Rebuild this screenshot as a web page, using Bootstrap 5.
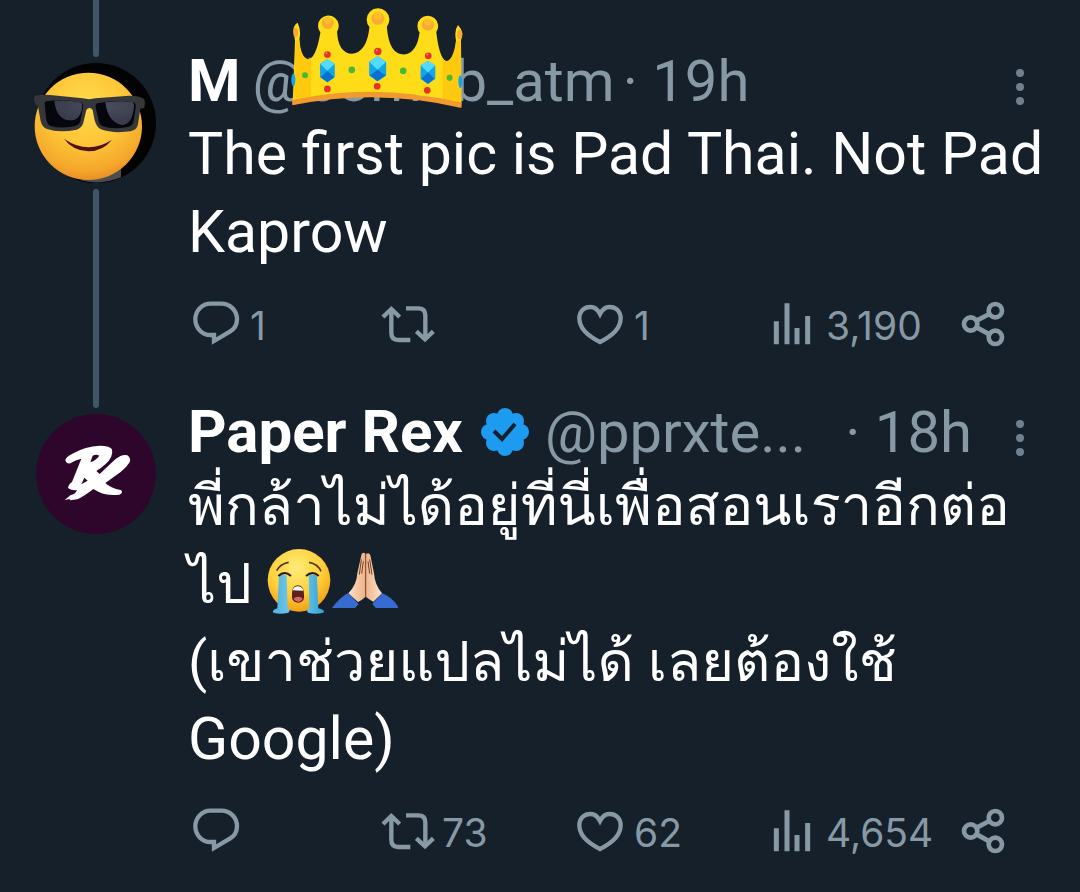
<!DOCTYPE html>
<html lang="en">
<head>
<meta charset="utf-8">
<meta name="viewport" content="width=device-width, initial-scale=1">
<title>Thread</title>
<link href="https://cdn.jsdelivr.net/npm/bootstrap@5.3.0/dist/css/bootstrap.min.css" rel="stylesheet">
<style>
:root { --page: #16202a; --muted: #8899a6; --thread: #3f5568; }
body { background: var(--page); color: #fff; font-family: Roboto, Loma, "Liberation Sans", sans-serif; font-size: 59px; overflow-x: hidden; }
.post { gap: 32px; padding: 0 36px; }
.rail { width: 120px; }
.thread-top, .thread-rest { width: 6px; background: var(--thread); }
.thread-top { height: 57px; border-radius: 0 0 3px 3px; margin-bottom: 6px; }
.thread-rest { border-radius: 3px 3px 0 0; margin-top: 6px; }
.avatar { width: 120px; height: 120px; overflow: visible; display: block; }
.post-main { padding-top: 47px; min-width: 0; }
.post-head { height: 68px; line-height: 68px; white-space: nowrap; }
.post-head a { text-decoration: none; }
.who { color: #fff; font-weight: 700; font-size: 60px; }
.handle, .when { color: var(--muted); font-size: 58px; }
.handle-box { margin-left: 12px; }
.when { margin-left: 8px; }
.more { width: 48px; height: 68px; }
.more svg { width: 48px; height: 48px; }
.post-text { line-height: 78px; margin: 0 0 30px; white-space: nowrap; }
.thai { font-size: 56px; line-height: 70px; }
.emoji { width: 66px; height: 66px; vertical-align: -12px; }
.crown { left: 38px; top: -40px; width: 172px; height: 102px; }
.tick { width: 48px; height: 48px; margin-left: 18px; }
.actions { display: grid; grid-template-columns: repeat(4, 1fr) 88px; }
.act { color: var(--muted); font: 39px/50px Inter, sans-serif; gap: 6px; }
.act svg { width: 56px; height: 48px; flex: none; }
</style>
</head>
<body>
<svg class="d-none" xmlns="http://www.w3.org/2000/svg">
  <symbol id="reply" viewBox="24 36 168 144"><path d="M92 44H124C150 44 171 64 171 91C171 108 163 121 148 129L102 156V138H92C66 138 46 117 46 91C46 65 66 44 92 44Z" fill="none" stroke="currentColor" stroke-width="13"/></symbol>
  <symbol id="repost" viewBox="600 36 168 144"><path d="M634 59V132Q634 153 655 153H691M609 84L634 60L659 84M678 58H715Q736 58 736 79V151M709 127L735 151L760 127" fill="none" stroke="currentColor" stroke-width="13"/></symbol>
  <symbol id="like" viewBox="36 36 168 144"><path d="M120 75C112 59 101 53 89 54C70 55 58 69 58 88C58 116 81 140 120 159C159 140 182 116 182 88C182 69 170 55 151 54C139 53 128 59 120 75Z" fill="none" stroke="currentColor" stroke-width="13"/></symbol>
  <symbol id="views" viewBox="612 36 168 144"><path d="M649 97V166M681 43V166M711 117V166M743 81V166" fill="none" stroke="currentColor" stroke-width="15"/></symbol>
  <symbol id="share" viewBox="408 36 168 144"><g fill="none" stroke="currentColor" stroke-width="14"><circle cx="452" cy="105" r="20"/><circle cx="526" cy="65" r="20"/><circle cx="526" cy="145" r="20"/><path d="M470 95L508 75M470 115L508 136"/></g></symbol>
  <symbol id="dots" viewBox="0 0 48 48"><g fill="#71808f"><circle cx="24" cy="16" r="4"/><circle cx="24" cy="30" r="4"/><circle cx="24" cy="44" r="4"/></g></symbol>
</svg>

<main>
<article class="post d-flex">
  <div class="rail d-flex flex-column align-items-center flex-shrink-0">
    <div class="thread-top"></div>
    <svg class="avatar" viewBox="48 69 360 360" role="img" aria-label="M">
      <defs>
        <radialGradient id="skin" cx=".48" cy=".3" r=".72"><stop offset="0" stop-color="#ffdb4d"/><stop offset=".5" stop-color="#fdc637"/><stop offset=".85" stop-color="#f5a72c"/><stop offset="1" stop-color="#e58a25"/></radialGradient>
        <radialGradient id="lens" cx=".6" cy=".25" r=".6"><stop offset="0" stop-color="#4b4e60"/><stop offset="1" stop-color="#3a3d4d"/></radialGradient>
      </defs>
      <circle cx="228" cy="249" r="180" fill="#030304"/>
      <path d="M180 420L303 382V412Q240 438 180 420Z" fill="#4d4d4d"/>
      <circle cx="205" cy="259" r="161" fill="url(#skin)"/>
      <path d="M132 296Q204 346 276 299Q250 333 205 334Q158 332 132 296Z" fill="#50120c"/>
      <path d="M42 170Q48 162 90 165L188 175Q207 180 226 175L328 167Q365 168 373 178Q377 190 373 203L361 207L354 252Q351 270 332 274Q277 281 243 268Q229 262 223 237L218 210Q208 198 199 210L190 248Q186 263 170 269Q118 280 81 267Q67 263 62 244L54 199Q41 194 42 170Z" fill="#36373a"/>
      <path d="M78 184Q130 176 181 187Q192 190 189 205L181 243Q178 256 162 259Q120 267 92 258Q82 254 79 239L74 194Q73 187 78 184ZM232 190Q285 180 335 185Q349 186 347 202L341 243Q338 258 324 261Q279 269 248 259Q237 255 235 238L227 202Q226 192 232 190Z" fill="#05070d"/>
      <path d="M103 182Q145 179 181 187Q188 190 186 203Q181 241 150 241Q109 239 103 182ZM256 187Q295 181 335 185Q343 187 342 199Q338 253 306 255Q263 247 256 187Z" fill="url(#lens)"/>
    </svg>
    <div class="thread-rest flex-grow-1"></div>
  </div>
  <div class="post-main flex-grow-1">
    <header class="post-head d-flex align-items-center">
      <a class="who" href="#">M</a>
      <span class="handle-box position-relative"><a class="handle" href="#">@born2b_atm</a>
        <svg class="crown position-absolute" viewBox="150 15 515 305" aria-hidden="true">
          <path d="M157 85Q158 68 170 62Q181 85 175 112Q178 175 199 173Q225 170 238 91A31 31 0 1 1 288 88Q291 153 333 155Q377 151 385 75A34 34 0 1 1 437 74Q443 157 488 157Q527 153 535 91A31 31 0 1 1 585 90Q595 180 622 180Q641 177 644 115Q638 85 650 69Q661 80 663 95L659 115L660 314Q410 258 155 305L162 115Z" fill="#ffdc18"/>
          <path d="M164 115L175 112Q180 175 210 172V285L158 302ZM604 173Q633 190 644 117L659 114L660 307L604 292Z" fill="#ffc90d"/>
          <path d="M154 293Q400 240 660 301V317Q408 257 154 309Z" fill="#f09a2f"/>
          <g fill="#f9a934"><circle cx="260" cy="63" r="18"/><circle cx="410" cy="49" r="19"/><circle cx="560" cy="68" r="18"/><ellipse cx="164" cy="91" rx="7" ry="14"/><ellipse cx="655" cy="97" rx="8" ry="14"/></g>
          <g fill="#fdbf28"><circle cx="260" cy="55" r="11"/><circle cx="410" cy="41" r="12"/><circle cx="560" cy="60" r="11"/></g>
          <g fill="#e4322b"><circle cx="259" cy="157" r="10"/><circle cx="410" cy="148" r="11"/><circle cx="561" cy="161" r="10"/><circle cx="259" cy="260" r="10"/><circle cx="408" cy="252" r="10"/><circle cx="558" cy="264" r="10"/></g>
          <g fill="#ff7669"><circle cx="256" cy="153" r="3"/><circle cx="407" cy="144" r="3"/><circle cx="558" cy="157" r="3"/></g>
          <g fill="#48b83b"><circle cx="192" cy="219" r="9"/><circle cx="332" cy="203" r="10"/><circle cx="486" cy="206" r="10"/><circle cx="625" cy="227" r="9"/></g>
          <g fill="#12a5e8"><ellipse cx="157" cy="233" rx="6" ry="19"/><ellipse cx="657" cy="238" rx="6" ry="19"/>
          <path d="M259 171L281 185V225L259 241L237 225V185ZM409 162L435 179V220L409 238L384 220V179ZM560 176L582 190V230L560 246L538 230V190Z"/></g>
          <path d="M259 171L281 185L259 206L237 185ZM409 162L435 179L409 203L384 179ZM560 176L582 190L560 211L538 190Z" fill="#52dbff"/>
          <path d="M259 206L279 225L259 239L239 225ZM409 203L433 220L409 236L386 220ZM560 211L580 230L560 244L540 230Z" fill="#0871cf"/>
        </svg>
      </span>
      <span class="when">· 19h</span>
      <button class="btn p-0 border-0 more ms-auto" aria-label="More"><svg><use href="#dots"/></svg></button>
    </header>
    <p class="post-text">The first pic is Pad Thai. Not Pad<br>Kaprow</p>
    <div class="actions">
      <button class="btn act p-0 border-0 d-flex" aria-label="Reply"><svg><use href="#reply"/></svg>1</button>
      <button class="btn act p-0 border-0 d-flex" aria-label="Repost"><svg><use href="#repost"/></svg></button>
      <button class="btn act p-0 border-0 d-flex" aria-label="Like"><svg><use href="#like"/></svg>1</button>
      <button class="btn act p-0 border-0 d-flex" aria-label="Views"><svg><use href="#views"/></svg>3,190</button>
      <button class="btn act p-0 border-0 d-flex" aria-label="Share"><svg><use href="#share"/></svg></button>
    </div>
  </div>
</article>

<article class="post d-flex">
  <div class="rail d-flex flex-column align-items-center flex-shrink-0">
    <div class="thread-top"></div>
    <svg class="avatar" viewBox="48 45 360 360" role="img" aria-label="Paper Rex">
      <circle cx="228" cy="225" r="180" fill="#2e062b"/>
      <g fill="#fff">
        <path fill-rule="evenodd" d="M136 184Q137 174 157 164Q197 141 239 140Q271 141 276 151Q281 174 256 196Q242 209 229 216L239 225L286 181Q306 165 322 169Q334 178 329 190Q320 205 302 219L256 252Q270 267 304 274Q310 283 298 287Q260 291 235 278L220 270Q192 292 172 301L150 304L148 300L134 303L152 288Q166 286 171 273Q156 276 144 267Q145 256 156 249L184 179Q166 182 151 193Q138 195 136 184ZM218 170L211 190Q228 184 238 170Q229 164 218 170ZM193 236L184 256L203 245Z"/>
      </g>
    </svg>
  </div>
  <div class="post-main flex-grow-1">
    <header class="post-head d-flex align-items-center">
      <a class="who" href="#">Paper Rex</a>
      <svg class="tick" viewBox="0 0 48 48" role="img" aria-label="Verified account"><g fill="#1d9bf0"><circle cx="24" cy="24" r="19"/><circle cx="24" cy="8" r="8"/><circle cx="35" cy="13" r="8"/><circle cx="40" cy="24" r="8"/><circle cx="35" cy="35" r="8"/><circle cx="24" cy="40" r="8"/><circle cx="13" cy="35" r="8"/><circle cx="8" cy="24" r="8"/><circle cx="13" cy="13" r="8"/></g><path d="M13 23L21 31L34 16" fill="none" stroke="#16202a" stroke-width="4"/></svg>
      <a class="handle ms-3" href="#">@pprxte...</a>
      <span class="when ms-auto">· 18h</span>
      <button class="btn p-0 border-0 more ms-4" aria-label="More"><svg><use href="#dots"/></svg></button>
    </header>
    <p class="post-text"><span class="thai" lang="th">พี่กล้าไม่ได้อยู่ที่นี่เพื่อสอนเราอีกต่อ<br>ไป</span>
      <svg class="emoji" viewBox="18 35 198 198" role="img" aria-label="Loudly crying">
        <defs><radialGradient id="cryskin" cx=".45" cy=".3" r=".7"><stop offset="0" stop-color="#ffec79"/><stop offset=".6" stop-color="#ffd03a"/><stop offset="1" stop-color="#f0a018"/></radialGradient><linearGradient id="tear"><stop stop-color="#4eb1df"/><stop offset=".5" stop-color="#7ed3f0"/><stop offset="1" stop-color="#2d9ed6"/></linearGradient></defs>
        <circle cx="117" cy="129" r="94" fill="url(#cryskin)"/>
        <path d="M50 100Q60 80 86 75M147 75Q174 80 183 102" fill="none" stroke="#5f3710" stroke-width="5"/>
        <path d="M64 111Q82 110 80 122L83 213Q94 217 85 226Q61 232 40 226Q34 219 52 213L57 118ZM146 111Q165 109 171 119L175 213Q198 219 190 226Q167 232 144 226Q137 217 148 213Z" fill="url(#tear)"/>
        <path d="M55 116Q74 98 93 116M138 116Q158 98 176 116" fill="none" stroke="#301b0b" stroke-width="6"/>
        <path d="M96 166Q97 144 115 144Q132 146 132 170V182Q130 195 115 196Q98 194 96 181Z" fill="#5c211b"/><path d="M98 159Q101 147 115 147Q127 148 130 160Z" fill="#fff"/><path d="M101 183Q115 173 128 183Q124 194 114 193Q105 193 101 183Z" fill="#dc6568"/>
      </svg><svg class="emoji" viewBox="219 35 198 198" role="img" aria-label="Folded hands">
        <defs><linearGradient id="hand" x1="0" x2="1"><stop stop-color="#ffe1c5"/><stop offset=".5" stop-color="#edb28a"/><stop offset="1" stop-color="#ffe3ca"/></linearGradient></defs>
        <path d="M308 49Q318 43 320 51Q330 44 334 54L345 108Q347 142 369 168L343 193Q332 187 320 178Q309 188 297 194L268 168Q293 143 295 108Z" fill="url(#hand)"/>
        <path d="M320 49V179M307 66L301 112M332 66L339 112M313 72L308 109M327 72L332 109" fill="none" stroke="#774029" stroke-width="3"/>
        <path d="M268 166L299 201L288 212H219Q239 183 268 166ZM370 168Q401 180 420 212H350L340 199Z" fill="#386bd2"/>
      </svg><br><span class="thai" lang="th">(เขาช่วยแปลไม่ได้ เลยต้องใช้</span><br>Google)</p>
    <div class="actions">
      <button class="btn act p-0 border-0 d-flex" aria-label="Reply"><svg><use href="#reply"/></svg></button>
      <button class="btn act p-0 border-0 d-flex" aria-label="Repost"><svg><use href="#repost"/></svg>73</button>
      <button class="btn act p-0 border-0 d-flex" aria-label="Like"><svg><use href="#like"/></svg>62</button>
      <button class="btn act p-0 border-0 d-flex" aria-label="Views"><svg><use href="#views"/></svg>4,654</button>
      <button class="btn act p-0 border-0 d-flex" aria-label="Share"><svg><use href="#share"/></svg></button>
    </div>
  </div>
</article>
</main>
<script src="https://cdn.jsdelivr.net/npm/bootstrap@5.3.0/dist/js/bootstrap.bundle.min.js"></script>
</body>
</html>
